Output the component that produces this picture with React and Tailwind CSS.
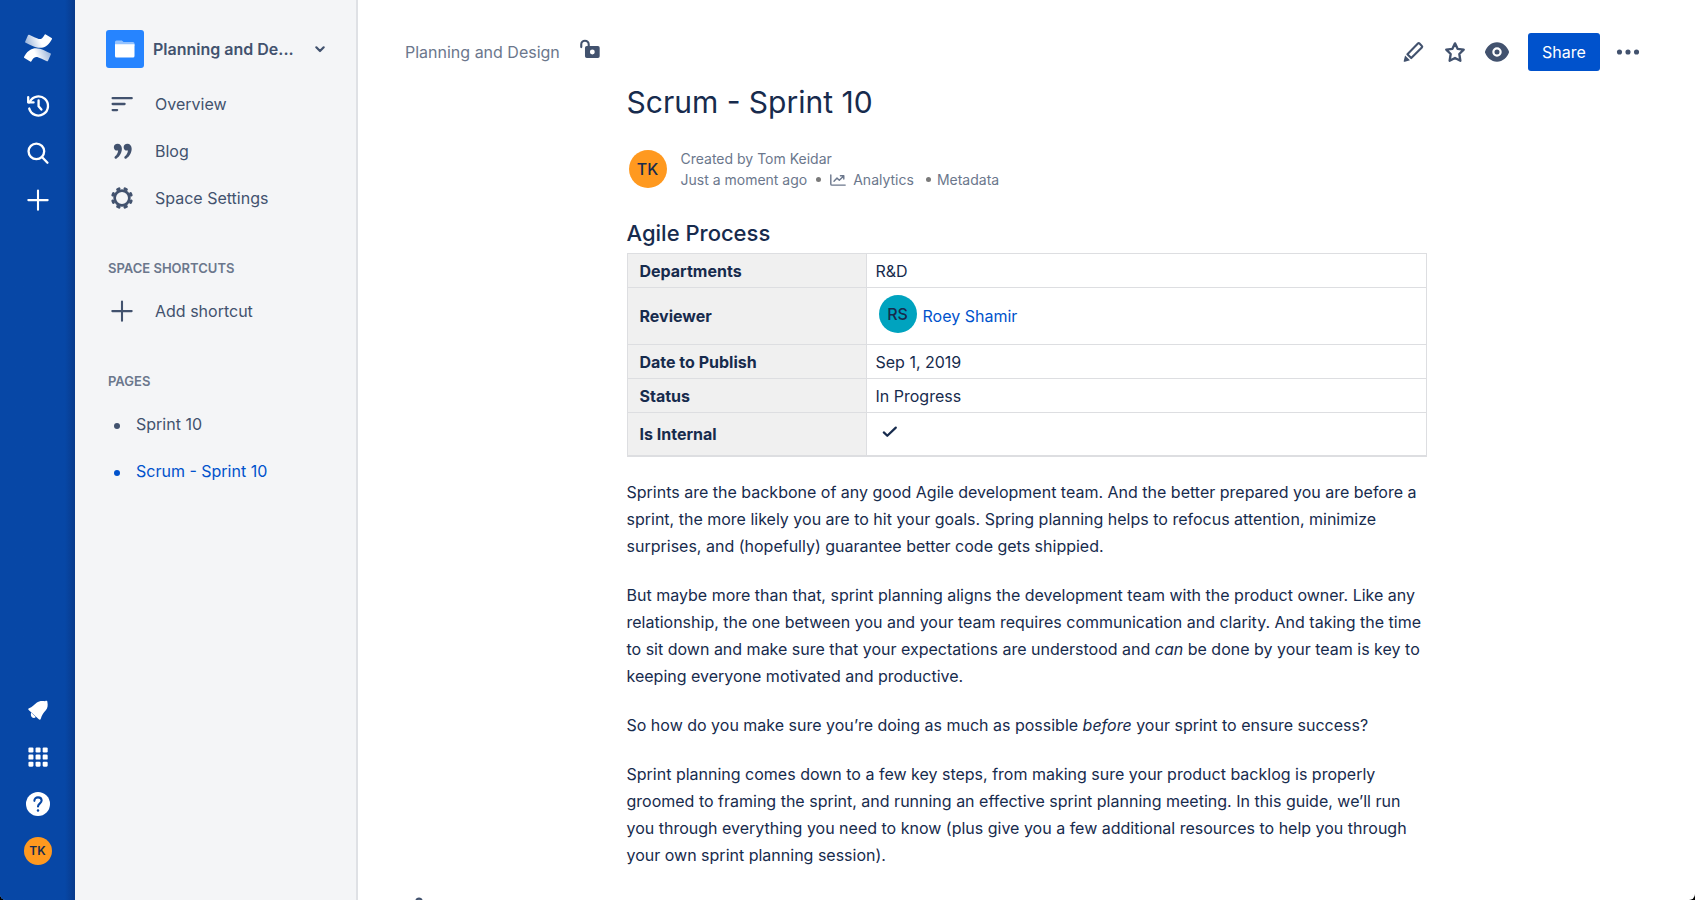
import React from "react";

const Icon = ({ children }) => (
  <svg
    viewBox="0 0 24 24"
    className="size-7 shrink-0"
    fill="none"
    stroke="currentColor"
    strokeWidth="1.8"
    strokeLinecap="round"
    strokeLinejoin="round"
    aria-hidden="true"
  >
    {children}
  </svg>
);

const ConfluenceLogo = () => (
  <svg viewBox="0 0 24 24" className="size-7" aria-hidden="true">
    <defs>
      <linearGradient id="logo-top" x1="1" y1="0.3" x2="0" y2="0.5">
        <stop offset="0.45" stopColor="#fff" />
        <stop offset="1" stopColor="#fff" stopOpacity="0.6" />
      </linearGradient>
      <linearGradient id="logo-bottom" x1="0" y1="0.7" x2="1" y2="0.5">
        <stop offset="0.45" stopColor="#fff" />
        <stop offset="1" stopColor="#fff" stopOpacity="0.6" />
      </linearGradient>
    </defs>
    <path
      fill="url(#logo-bottom)"
      d="M.87 18.257c-.248.382-.53.875-.763 1.245a.764.764 0 0 0 .255 1.04l4.965 3.054a.764.764 0 0 0 1.058-.26c.199-.332.454-.763.733-1.221 1.967-3.247 3.945-2.853 7.508-1.146l4.957 2.337a.764.764 0 0 0 1.028-.382l2.364-5.346a.764.764 0 0 0-.382-1 599.851 599.851 0 0 1-4.965-2.361C10.911 10.97 5.224 11.185.87 18.257z"
    />
    <path
      fill="url(#logo-top)"
      d="M23.131 5.743c.249-.405.531-.875.764-1.25a.764.764 0 0 0-.256-1.034L18.675.404a.764.764 0 0 0-1.058.26c-.195.335-.451.763-.734 1.225-1.966 3.246-3.945 2.85-7.508 1.146L4.437.694a.764.764 0 0 0-1.027.382L1.046 6.422a.764.764 0 0 0 .382 1c1.039.49 3.105 1.467 4.965 2.361 6.698 3.246 12.392 3.029 16.738-4.04z"
    />
  </svg>
);

const RecentIcon = () => (
  <Icon>
    <path strokeWidth="2" d="M4.500 14.200a8.200 8.200 0 1 0 .600-6l-.800.600" />
    <path strokeWidth="2" d="M3.600 4.400v4.500h4.600M12.500 7.200v5l2.400 2.800" />
  </Icon>
);

const SearchIcon = () => (
  <Icon>
    <circle cx="10.600" cy="10.600" r="6.700" strokeWidth="2" />
    <path strokeWidth="2" d="M15.600 15.600l4.500 4.700" />
  </Icon>
);

const PlusIcon = () => (
  <Icon>
    <path d="M12 3.800v16.600M3.700 12.100h16.600" />
  </Icon>
);

const BellIcon = () => (
  <Icon>
    <g fill="currentColor" stroke="none">
      <path d="M4.300 10.500c2.700-1.100 4.500-2.900 6.500-4.700 2-1.700 4.800-1.800 7.300-1.300.9-.8 2.300-.1 2 1.100.4 2.300.3 4.700-1.400 6.700-1.800 2.100-3.500 4.300-4.300 7.300-.2.800-1.100 1-1.700.4l-8.700-8.100c-.5-.5-.4-1.200.3-1.400z" />
      <path d="M6.200 14.200l3.900 3.900c-.8.900-2.300 1-3.300.1-1-.9-1.200-2.700-.6-4z" />
    </g>
  </Icon>
);

const GridIcon = () => (
  <Icon>
    <g fill="currentColor" stroke="none">
      {[3.8, 9.9, 16].map((y) =>
        [3.8, 9.9, 16].map((x) => (
          <rect key={`${x}-${y}`} x={x} y={y} width="4.3" height="4.3" rx="1" />
        ))
      )}
    </g>
  </Icon>
);

const HelpIcon = () => (
  <Icon>
    <circle cx="12" cy="12" r="10.300" fill="currentColor" stroke="none" />
    <g stroke="#0747A6">
      <path d="M8.900 9.300c0-1.900 1.400-3 3.100-3s3.100 1.100 3.100 2.800c0 2.300-3.100 2.400-3.100 5" />
      <path strokeWidth="2.100" d="M12 17.600v.01" />
    </g>
  </Icon>
);

const OverviewIcon = () => (
  <Icon>
    <path strokeWidth="2" d="M4 6.900h16.300M4 12h10.200M4 17.200h3.800" />
  </Icon>
);

const QuoteIcon = () => (
  <Icon>
    <g fill="currentColor" stroke="none">
      <path d="M8.200 5.700C6.300 5.700 5 7 5 8.700s1.200 2.900 2.700 2.900c.4 0 .7 0 1-.1-.2 2-1.200 3.900-2.600 5.100-.6.5-.7 1.100-.3 1.600.4.500 1 .6 1.600.2 2.600-1.700 4.500-5 4.500-8.300 0-2.700-1.500-4.400-3.700-4.400z" />
      <path d="M16.600 5.700c-1.900 0-3.200 1.300-3.200 3s1.200 2.900 2.700 2.900c.4 0 .7 0 1-.1-.2 2-1.200 3.900-2.600 5.100-.6.5-.7 1.100-.3 1.600.4.500 1 .6 1.600.2 2.600-1.700 4.500-5 4.500-8.300 0-2.700-1.500-4.400-3.700-4.400z" />
    </g>
  </Icon>
);

const GearIcon = () => (
  <Icon>
    <circle cx="12" cy="12" r="6.300" strokeWidth="2.300" />
    {[22.5, 67.5, 112.5, 157.5, 202.5, 247.5, 292.5, 337.5].map((a) => (
      <path
        key={a}
        d="M11.300 3.800h1.400"
        strokeWidth="2.500"
        transform={`rotate(${a} 12 12)`}
      />
    ))}
  </Icon>
);

const FolderIcon = () => (
  <svg viewBox="0 0 20 18" className="h-[18px] w-5" aria-hidden="true">
    <path
      fill="#fff"
      fillOpacity="0.5"
      d="M0 2a1.500 1.500 0 0 1 1.500-1.500h5.300L8.600 2h9.400a1.500 1.500 0 0 1 1.500 1.500V6H0z"
    />
    <path fill="#fff" d="M0 4.300h19.500V16a1.500 1.500 0 0 1-1.500 1.500H1.500A1.500 1.500 0 0 1 0 16z" />
  </svg>
);

const ChevronIcon = () => (
  <svg viewBox="0 0 12 12" className="size-3 shrink-0" fill="none" aria-hidden="true">
    <path
      d="M2.300 4.300L6 8l3.700-3.700"
      stroke="currentColor"
      strokeWidth="2.200"
      strokeLinecap="round"
      strokeLinejoin="round"
    />
  </svg>
);

const UnlockIcon = () => (
  <Icon>
    <path d="M4.500 7.800V5.500a3.200 3.200 0 0 1 6.400 0V8" />
    <path
      fill="currentColor"
      stroke="none"
      fillRule="evenodd"
      d="M9.200 6.900h9.600a1.500 1.500 0 0 1 1.500 1.500v7.300a1.500 1.500 0 0 1-1.500 1.500H9.200a1.500 1.500 0 0 1-1.500-1.500V8.400a1.500 1.500 0 0 1 1.500-1.500zM14 9.900a2.100 2.100 0 1 0 0 4.200 2.100 2.100 0 0 0 0-4.200z"
    />
  </Icon>
);

const PencilIcon = () => (
  <Icon>
    <path d="M7.200 13.900l9-9.100a1 1 0 0 1 1.400 0l2 2a1 1 0 0 1 0 1.400l-9.100 9z" />
    <path
      fill="currentColor"
      stroke="none"
      d="M5.200 14.900l4.200 4.200-4.300 1.300c-.8.200-1.200-.2-1-1z"
    />
  </Icon>
);

const StarIcon = () => (
  <Icon>
    <path
      strokeWidth="2"
      d="M12 4.600l2.200 4.700 5.300.7-3.800 3.700.9 5.800-4.600-2.400-4.600 2.400.9-5.800L4.500 10l5.300-.7z"
    />
  </Icon>
);

const EyeIcon = () => (
  <Icon>
    <path
      fill="currentColor"
      stroke="none"
      d="M12 3.700c5 0 8.600 3.800 10 7.200.4.800.4 1.400 0 2.200-1.400 3.400-5 7.200-10 7.200s-8.600-3.800-10-7.200c-.4-.8-.4-1.400 0-2.200 1.400-3.400 5-7.200 10-7.200z"
    />
    <circle cx="12" cy="12" r="3.100" stroke="#fff" strokeWidth="1.900" />
  </Icon>
);

const MoreIcon = () => (
  <Icon>
    <g fill="currentColor" stroke="none">
      <circle cx="4.700" cy="12" r="2.200" />
      <circle cx="12" cy="12" r="2.200" />
      <circle cx="19.300" cy="12" r="2.200" />
    </g>
  </Icon>
);

const AnalyticsIcon = () => (
  <svg
    viewBox="0 0 16 12"
    className="h-3 w-4"
    fill="none"
    stroke="currentColor"
    strokeWidth="1.400"
    strokeLinecap="round"
    strokeLinejoin="round"
    aria-hidden="true"
  >
    <path d="M.8.900v9c0 .8.400 1.200 1.200 1.200h13.200M4 7.300l3-3.200 2.300 2.100 4.400-4.300M10.400 1.700h3.400V5" />
  </svg>
);

const CheckIcon = () => (
  <svg viewBox="0 0 16 12" className="h-3 w-4" fill="none" role="img" aria-label="Yes">
    <path
      d="M1.800 6.400L5.300 9.800l8.500-8.200"
      stroke="currentColor"
      strokeWidth="2.200"
      strokeLinecap="round"
      strokeLinejoin="round"
    />
  </svg>
);

const PersonIcon = () => (
  <Icon>
    <circle cx="12" cy="5.200" r="2.100" strokeWidth="2" />
    <path d="M6 20v-4a5 5 0 0 1 12 0v4" />
  </Icon>
);

const RailButton = ({ label, children }) => (
  <button type="button" aria-label={label} className="flex h-[47px] w-full items-center justify-center">
    {children}
  </button>
);

const NavItem = ({ icon, children }) => (
  <li>
    <a href="#" className="flex h-[47px] items-center gap-[19px] pl-[33px]">
      {icon}
      {children}
    </a>
  </li>
);

const PageItem = ({ active, children }) => (
  <li>
    <a
      href="#"
      className={`flex h-[47px] items-center gap-4 pl-[39px] ${active ? "text-[#0052CC]" : ""}`}
    >
      <span className="mt-1 size-1.5 rounded-full bg-current" />
      {children}
    </a>
  </li>
);

const details = [
  { label: "Departments", value: "R&D", height: "h-[34px]" },
  {
    label: "Reviewer",
    height: "h-[57px]",
    value: (
      <span className="flex items-center gap-1.5 pl-[3px]">
        <span className="mb-1 flex size-[38px] items-center justify-center rounded-full bg-[#00A3BF] font-medium">
          RS
        </span>
        <a href="#" className="text-[#0052CC]">
          Roey Shamir
        </a>
      </span>
    ),
  },
  { label: "Date to Publish", value: "Sep 1, 2019", height: "h-[34px]" },
  { label: "Status", value: "In Progress", height: "h-[34px]" },
  {
    label: "Is Internal",
    height: "h-[43px]",
    value: (
      <span className="flex pb-1 pl-1.5">
        <CheckIcon />
      </span>
    ),
  },
];

const Rail = () => (
  <nav
    aria-label="Global"
    className="flex w-[75px] shrink-0 flex-col justify-between bg-[#0747A6] bg-linear-to-l from-[#083A8B] to-[#0747A6] to-[10px] pt-6 pb-[26px] text-white"
  >
    <div>
      <RailButton label="Confluence">
        <ConfluenceLogo />
      </RailButton>
      <div className="mt-[11px]">
        <RailButton label="Recent">
          <RecentIcon />
        </RailButton>
        <RailButton label="Search">
          <SearchIcon />
        </RailButton>
        <RailButton label="Create">
          <PlusIcon />
        </RailButton>
      </div>
    </div>
    <div>
      <RailButton label="Notifications">
        <BellIcon />
      </RailButton>
      <RailButton label="Apps">
        <GridIcon />
      </RailButton>
      <RailButton label="Help">
        <HelpIcon />
      </RailButton>
      <RailButton label="Profile">
        <span className="flex size-7 items-center justify-center rounded-full bg-[#FF991F] text-xs font-semibold text-[#172B4D]">
          TK
        </span>
      </RailButton>
    </div>
  </nav>
);

const Sidebar = () => (
  <aside className="w-[283px] shrink-0 border-r-2 border-[#DFE1E5] bg-[#F4F5F7] pt-[30px] text-[#42526E]">
    <button type="button" className="flex h-[38px] w-full items-center pr-[30px] pl-[31px] text-left">
      <span className="flex size-[38px] shrink-0 items-center justify-center rounded-[3px] bg-[#2684FF]">
        <FolderIcon />
      </span>
      <span className="ml-[9px] font-semibold">Planning and De...</span>
      <span className="ml-auto">
        <ChevronIcon />
      </span>
    </button>

    <ul className="mt-3">
      <NavItem icon={<OverviewIcon />}>Overview</NavItem>
      <NavItem icon={<QuoteIcon />}>Blog</NavItem>
      <NavItem icon={<GearIcon />}>Space Settings</NavItem>
    </ul>

    <h2 className="mt-[37px] pl-[33px] text-[13px] leading-5 font-semibold text-[#6B778C]">
      SPACE SHORTCUTS
    </h2>
    <ul className="mt-[9px]">
      <NavItem icon={<PlusIcon />}>Add shortcut</NavItem>
    </ul>

    <h2 className="mt-[37px] pl-[33px] text-[13px] leading-5 font-semibold text-[#6B778C]">PAGES</h2>
    <ul className="mt-[9px]">
      <PageItem>Sprint 10</PageItem>
      <PageItem active>Scrum - Sprint 10</PageItem>
    </ul>
  </aside>
);

const TopBar = () => (
  <header className="flex h-[38px] items-center justify-between pr-[53px] pl-[47px] text-[#42526E]">
    <div className="flex items-center gap-4">
      <a href="#" className="text-[#6B778C]">
        Planning and Design
      </a>
      <button type="button" aria-label="Restrictions">
        <UnlockIcon />
      </button>
    </div>
    <div className="flex items-center gap-[14px]">
      <button type="button" aria-label="Edit">
        <PencilIcon />
      </button>
      <button type="button" aria-label="Star">
        <StarIcon />
      </button>
      <button type="button" aria-label="Watch">
        <EyeIcon />
      </button>
      <button type="button" className="ml-[3px] h-[38px] w-[72px] rounded-[3px] bg-[#0052CC] text-white">
        Share
      </button>
      <button type="button" aria-label="More actions">
        <MoreIcon />
      </button>
    </div>
  </header>
);

const App = () => {
  return (
    <div className="h-screen bg-black">
      <div className="flex h-full overflow-hidden rounded-b-md bg-white font-['Inter','Liberation_Sans',sans-serif] text-base text-[#172B4D]">
        <Rail />
        <Sidebar />
        <main className="min-w-0 flex-1 overflow-hidden pt-[33px]">
          <TopBar />

          <article className="mx-auto max-w-[800px]">
            <h1 className="mt-[11px] text-[30px] leading-10">Scrum - Sprint 10</h1>

            {/* Byline */}
            <div className="mt-[26px] flex items-center gap-[14px] pl-0.5 text-sm leading-[21px] text-[#6B778C]">
              <span className="flex size-[38px] items-center justify-center rounded-full bg-[#FF991F] text-base font-medium text-[#172B4D]">
                TK
              </span>
              <div>
                <p>Created by Tom Keidar</p>
                <p className="flex items-center">
                  Just a moment ago
                  <span className="mx-[9px] size-[5px] rounded-full bg-[#7A7A7A]" />
                  <a href="#" className="flex items-center gap-[7px]">
                    <AnalyticsIcon />
                    Analytics
                  </a>
                  <span className="mr-1.5 ml-3 size-[5px] rounded-full bg-[#7A7A7A]" />
                  <a href="#">Metadata</a>
                </p>
              </div>
            </div>

            <h2 className="mt-[29px] text-[22px] leading-7 font-medium">Agile Process</h2>
            <table className="mt-1.5 w-full border-collapse border border-b-2 border-[#DDDEE1]">
              <tbody>
                {details.map((row) => (
                  <tr key={row.label} className={`border-b border-[#DDDEE1] ${row.height}`}>
                    <th scope="row" className="w-[239px] bg-[#F0F0F0] p-0 pl-3 text-left font-bold">
                      {row.label}
                    </th>
                    <td className="border-l border-[#DDDEE1] p-0 pl-[9px]">{row.value}</td>
                  </tr>
                ))}
              </tbody>
            </table>

            <div className="mt-[22px] space-y-[22px] leading-[27px]">
              <p>
                Sprints are the backbone of any good Agile development team. And the better prepared
                you are before a sprint, the more likely you are to hit your goals. Spring planning
                helps to refocus attention, minimize surprises, and (hopefully) guarantee better code
                gets shippied.
              </p>
              <p>
                But maybe more than that, sprint planning aligns the development team with the
                product owner. Like any relationship, the one between you and your team requires
                communication and clarity. And taking the time to sit down and make sure that your
                expectations are understood and <em>can</em> be done by your team is key to keeping
                everyone motivated and productive.
              </p>
              <p>
                So how do you make sure you’re doing as much as possible <em>before</em> your sprint
                to ensure success?
              </p>
              <p>
                Sprint planning comes down to a few key steps, from making sure your product backlog
                is properly groomed to framing the sprint, and running an effective sprint planning
                meeting. In this guide, we’ll run you through everything you need to know (plus give
                you a few additional resources to help you through your own sprint planning session).
              </p>
            </div>
          </article>

          <footer className="mt-[26px] pl-[47px] text-[#42526E]">
            <PersonIcon />
          </footer>
        </main>
      </div>
    </div>
  );
};

export default App;
